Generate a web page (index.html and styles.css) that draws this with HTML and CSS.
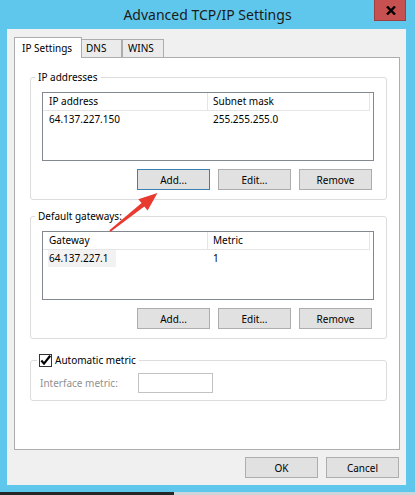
FILE: index.html
```html
<!DOCTYPE html>
<html lang="en">
  <head>
    <meta charset="UTF-8" />
    <meta name="viewport" content="width=device-width, initial-scale=1.0" />
    <title>Advanced TCP/IP Settings</title>
    <link rel="stylesheet" href="styles.css">
  </head>
  <body>
    <div class="window">
      <div class="titlebar">
        <span class="title">Advanced TCP/IP Settings</span>
        <button class="close-button" type="button">
          <svg width="10" height="9" viewBox="0 0 10 9">
            <path d="M1 0.5 L9 8.5 M9 0.5 L1 8.5" stroke="#000" stroke-width="2.4" />
          </svg>
        </button>
      </div>

      <div class="client">
        <div class="tabs">
          <div class="tab tab-ip active">IP Settings</div>
          <div class="tab tab-dns">DNS</div>
          <div class="tab tab-wins">WINS</div>
        </div>

        <div class="panel">
          <fieldset class="group">
            <legend>IP addresses</legend>
            <div class="listview">
              <div class="list-header">
                <div class="col col-1">IP address</div>
                <div class="col col-2">Subnet mask</div>
              </div>
              <div class="list-row">
                <div class="col col-1">64.137.227.150</div>
                <div class="col col-2">255.255.255.0</div>
              </div>
            </div>
            <div class="button-row">
              <button class="btn focused" type="button">Add...</button>
              <button class="btn" type="button">Edit...</button>
              <button class="btn" type="button">Remove</button>
            </div>
          </fieldset>

          <fieldset class="group gateway-group">
            <legend>Default gateways:</legend>
            <div class="listview">
              <div class="list-header">
                <div class="col col-1">Gateway</div>
                <div class="col col-2">Metric</div>
              </div>
              <div class="list-row">
                <div class="col col-1 selected-col"><span class="selected">64.137.227.1</span></div>
                <div class="col col-2">1</div>
              </div>
            </div>
            <div class="button-row">
              <button class="btn" type="button">Add...</button>
              <button class="btn" type="button">Edit...</button>
              <button class="btn" type="button">Remove</button>
            </div>
          </fieldset>

          <fieldset class="group metric-group">
            <legend>
              <label class="checkbox">
                <svg width="13" height="13" viewBox="0 0 13 13">
                  <rect x="0.5" y="0.5" width="12" height="12" fill="#fff" stroke="#333" />
                  <path d="M2.3 6.6 L5 9.6 L11.2 1.8" fill="none" stroke="#000" stroke-width="2.2" />
                </svg>
                Automatic metric
              </label>
            </legend>
            <div class="metric-row">
              <span class="disabled-label">Interface metric:</span>
              <span class="textbox"></span>
            </div>
          </fieldset>
        </div>

        <div class="dialog-buttons">
          <button class="btn" type="button">OK</button>
          <button class="btn" type="button">Cancel</button>
        </div>
      </div>
    </div>
    <div class="desktop-strip"></div>

    <!-- red annotation arrow drawn over the dialog -->
    <svg class="arrow" width="415" height="495" viewBox="0 0 415 495">
      <polygon
        points="157.5,193 147.6,210.4 144.3,206.6 110.6,231.8 109.4,230.2 141.6,203.1 138.3,199.2"
        fill="#e93a30"
      />
    </svg>
  </body>
</html>
```

FILE: styles.css
```css
body {
  margin: 0;
  padding: 0;
  font-family: "Noto Sans", sans-serif;
  font-size: 10px;
  color: #000;
  background-color: #60c7ec;
  position: relative;
  width: 415px;
  height: 495px;
  overflow: hidden;
}
.window {
  width: 415px;
  height: 492px;
  background-color: #60c7ec;
  position: relative;
}
.titlebar {
  height: 29px;
  line-height: 30px;
  text-align: center;
}
.title {
  font-size: 14px;
  color: #1b1b1b;
}
.close-button {
  position: absolute;
  top: 0;
  right: 9px;
  width: 32px;
  height: 21px;
  padding: 0 0 0 2px;
  border: 1px solid #9b4040;
  border-top: none;
  background-color: #c75050;
  display: flex;
  align-items: center;
  justify-content: center;
}
.client {
  margin-left: 7px;
  width: 399px;
  height: 456px;
  box-sizing: border-box;
  padding: 8px 0 0 7px;
  background-color: #f0f0f0;
}
.tabs {
  display: flex;
  align-items: flex-end;
}
.tab {
  height: 18px;
  line-height: 17px;
  box-sizing: border-box;
  border: 1px solid #adadad;
  border-bottom: none;
  background-color: #ebebeb;
}
.tab.active {
  position: relative;
  height: 21px;
  line-height: 20px;
  margin-bottom: -1px;
  background-color: #fff;
}
.tab-ip {
  width: 68px;
  padding-left: 7px;
}
.tab-dns {
  width: 40px;
  padding-left: 4px;
  border-left: none;
}
.tab-wins {
  width: 42px;
  padding-left: 5px;
}
.panel {
  width: 386px;
  height: 393px;
  box-sizing: border-box;
  border: 1px solid #adadad;
  background-color: #fff;
  padding: 12px 12px 0 15px;
}
.group {
  margin: 0;
  min-width: 0;
  border: 1px solid #dcdcdc;
  border-radius: 3px;
  padding: 8px 12px 9px 11px;
}
.group legend {
  line-height: 14px;
  height: 14px;
  padding: 0 3px;
  margin-left: -7px;
}
.gateway-group {
  margin-top: 9px;
}
.listview {
  height: 69px;
  box-sizing: border-box;
  border: 1px solid #828790;
}
.list-header {
  display: flex;
  height: 18px;
  box-sizing: border-box;
  line-height: 17px;
}
.list-header .col {
  border-bottom: 1px solid #e5e5e5;
  border-right: 1px solid #e5e5e5;
}
.list-row {
  display: flex;
  height: 17px;
  line-height: 17px;
}
.col {
  box-sizing: border-box;
  white-space: nowrap;
}
.col-1 {
  width: 165px;
  padding-left: 6px;
}
.col-2 {
  width: 162px;
  padding-left: 5px;
}
.selected-col {
  padding-left: 5px;
}
.selected {
  display: inline-block;
  height: 17px;
  padding: 0 7px 0 1px;
  background-color: #f2f2f2;
}
.button-row {
  display: flex;
  justify-content: flex-end;
  gap: 8px;
  margin-top: 8px;
  padding-right: 2px;
}
.btn {
  width: 73px;
  height: 21px;
  padding: 0;
  border: 1px solid #adadad;
  background-color: #e1e1e1;
  font-family: "Noto Sans", sans-serif;
  font-size: 10px;
  color: #000;
}
.btn.focused {
  border-color: #3c7fb1;
}
.metric-group {
  margin-top: 14px;
  padding: 6px 12px 7px 9px;
}
.metric-group legend {
  padding: 0 3px 0 2px;
  margin-left: -3px;
}
.checkbox {
  display: flex;
  align-items: center;
  gap: 3px;
  height: 14px;
}
.metric-row {
  display: flex;
  align-items: center;
  height: 20px;
}
.disabled-label {
  width: 98px;
  color: #919191;
}
.textbox {
  width: 75px;
  height: 20px;
  box-sizing: border-box;
  border: 1px solid #c2c2c2;
  background-color: #fff;
}
.dialog-buttons {
  display: flex;
  justify-content: flex-end;
  gap: 8px;
  margin-top: 7px;
  padding-right: 7px;
}
.desktop-strip {
  height: 3px;
  background: linear-gradient(to right, #262626 174px, #cdd5da 174px);
}
.arrow {
  position: absolute;
  top: 0;
  left: 0;
  pointer-events: none;
}
```
